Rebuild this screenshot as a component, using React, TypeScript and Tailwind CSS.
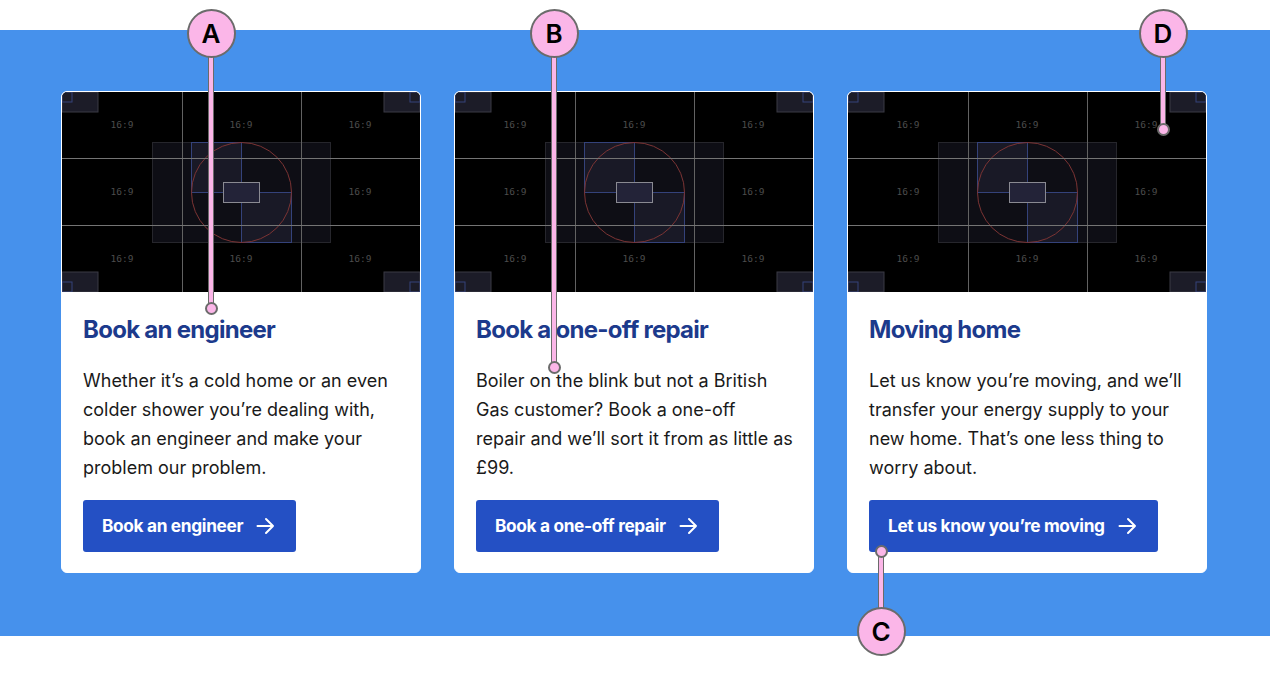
import React from 'react';

// body copy kept in the line breaks the design uses
const cards = [
  {
    title: 'Book an engineer',
    lines: ['Whether it’s a cold home or an even', 'colder shower you’re dealing with,', 'book an engineer and make your', 'problem our problem.'],
    cta: 'Book an engineer',
  },
  {
    title: 'Book a one-off repair',
    lines: ['Boiler on the blink but not a British', 'Gas customer? Book a one-off', 'repair and we’ll sort it from as little as', '£99.'],
    cta: 'Book a one-off repair',
  },
  {
    title: 'Moving home',
    lines: ['Let us know you’re moving, and we’ll', 'transfer your energy supply to your', 'new home. That’s one less thing to', 'worry about.'],
    cta: 'Let us know you’re moving',
  },
];

// 16:9 placeholder graphic
const Placeholder = () => {
  const labels = [
    [60, 33], [179, 33], [298, 33],
    [60, 100], [298, 100],
    [60, 167], [179, 167], [298, 167],
  ];
  return (
    <svg width="358" height="200" viewBox="0 0 358 200" className="block">
      <rect width="358" height="200" fill="#000" />
      <rect x="90.5" y="50.5" width="178" height="100" fill="#0e0e15" stroke="#26262c" />
      <rect x="129.5" y="50.5" width="50" height="50" fill="#191926" stroke="#34427a" />
      <rect x="179.5" y="100.5" width="50" height="50" fill="#191926" stroke="#34427a" />
      <line x1="129" y1="100.5" x2="229" y2="100.5" stroke="#34427a" />
      <line x1="179.5" y1="50" x2="179.5" y2="150" stroke="#34427a" />
      <circle cx="179.5" cy="100.5" r="50" fill="none" stroke="#7c3434" />
      <rect x="161.5" y="90.5" width="36" height="20" fill="#232338" stroke="#8a8a92" />
      {/* corners */}
      <rect x="0" y="0" width="36" height="20" fill="#1c1c28" stroke="#3a3a44" />
      <rect x="322" y="0" width="36" height="20" fill="#1c1c28" stroke="#3a3a44" />
      <rect x="0" y="180" width="36" height="20" fill="#1c1c28" stroke="#3a3a44" />
      <rect x="322" y="180" width="36" height="20" fill="#1c1c28" stroke="#3a3a44" />
      <rect x="0" y="0" width="10" height="10" fill="none" stroke="#34427a" />
      <rect x="348" y="0" width="10" height="10" fill="none" stroke="#34427a" />
      <rect x="0" y="190" width="10" height="10" fill="none" stroke="#34427a" />
      <rect x="348" y="190" width="10" height="10" fill="none" stroke="#34427a" />
      {/* grid */}
      <line x1="120.5" y1="0" x2="120.5" y2="200" stroke="#626262" />
      <line x1="239.5" y1="0" x2="239.5" y2="200" stroke="#626262" />
      <line x1="0" y1="66.5" x2="358" y2="66.5" stroke="#747474" />
      <line x1="0" y1="133.5" x2="358" y2="133.5" stroke="#747474" />
      {labels.map(([x, y], i) => (
        <text
          key={i}
          x={x}
          y={y + 3}
          textAnchor="middle"
          fontFamily="'DejaVu Sans Mono', monospace"
          fontSize="9.5"
          fill="#4c4c4c"
        >
          16:9
        </text>
      ))}
    </svg>
  );
};

const Arrow = () => (
  <svg width="19" height="18" viewBox="0 0 19 18" fill="none" stroke="currentColor" strokeWidth="2" strokeLinecap="round" strokeLinejoin="round">
    <path d="M1.5 9h15.5M10 2l7 7-7 7" />
  </svg>
);

const Card = ({ title, lines, cta }: { title: string; lines: string[]; cta: string }) => (
  <div className="flex flex-col overflow-hidden rounded-[6px] border border-white bg-white">
    <div className="overflow-hidden rounded-t-[5px]">
      <Placeholder />
    </div>
    <div className="flex flex-col items-start px-[21px] pb-[20px] pt-[22px]">
      <h3 className="text-[24px] font-bold leading-[32px] tracking-[-0.03em] text-[#1c3a8c]">{title}</h3>
      <p className="mt-[20px] text-[18px] leading-[29px] text-[#1a1a1a]">
        {lines.map((l) => (
          <span key={l} className="block whitespace-nowrap">
            {l}
          </span>
        ))}
      </p>
      <button className="mt-[18px] flex h-[52px] items-center gap-[13px] rounded-[3px] bg-[#2450c4] pl-[19px] pr-[21px] text-[17.3px] font-bold tracking-[-0.02em] text-white">
        <span>{cta}</span>
        <Arrow />
      </button>
    </div>
  </div>
);

// callout marker: pink circle with letter, stem and end dot
const Marker = ({ letter, x, cy, dotY }: { letter: string; x: number; cy: number; dotY: number }) => {
  const top = Math.min(cy, dotY);
  const h = Math.abs(dotY - cy);
  return (
    <>
      <div
        className="absolute w-[6px] border-x-[1.5px] border-[#6b6b6b] bg-[#fbb6e8]"
        style={{ left: x - 3, top, height: h }}
      />
      <div
        className="absolute h-[13px] w-[13px] rounded-full border-2 border-[#6b6b6b] bg-[#fbb6e8]"
        style={{ left: x - 6.5, top: dotY - 6.5 }}
      />
      <div
        className="absolute flex h-[49px] w-[49px] items-center justify-center rounded-full border-2 border-[#6b6b6b] bg-[#fbb6e8] text-[26px] font-semibold text-black"
        style={{ left: x - 24.5, top: cy - 24.5 }}
      >
        {letter}
      </div>
    </>
  );
};

export default function App() {
  return (
    <div className="relative h-[674px] w-[1280px] overflow-hidden bg-white font-['Inter',sans-serif]">
      <div className="h-[30px]" />
      <section className="w-[1270px] bg-[#4691ec] pb-[63px] pt-[61px]">
        <div className="ml-[61px] grid w-[1146px] grid-cols-3 gap-[33px]">
          {cards.map((c) => (
            <Card key={c.title} {...c} />
          ))}
        </div>
      </section>
      <Marker letter="A" x={211} cy={33} dotY={308} />
      <Marker letter="B" x={554} cy={33} dotY={367} />
      <Marker letter="D" x={1163} cy={33} dotY={129} />
      <Marker letter="C" x={881} cy={631} dotY={551} />
    </div>
  );
}
